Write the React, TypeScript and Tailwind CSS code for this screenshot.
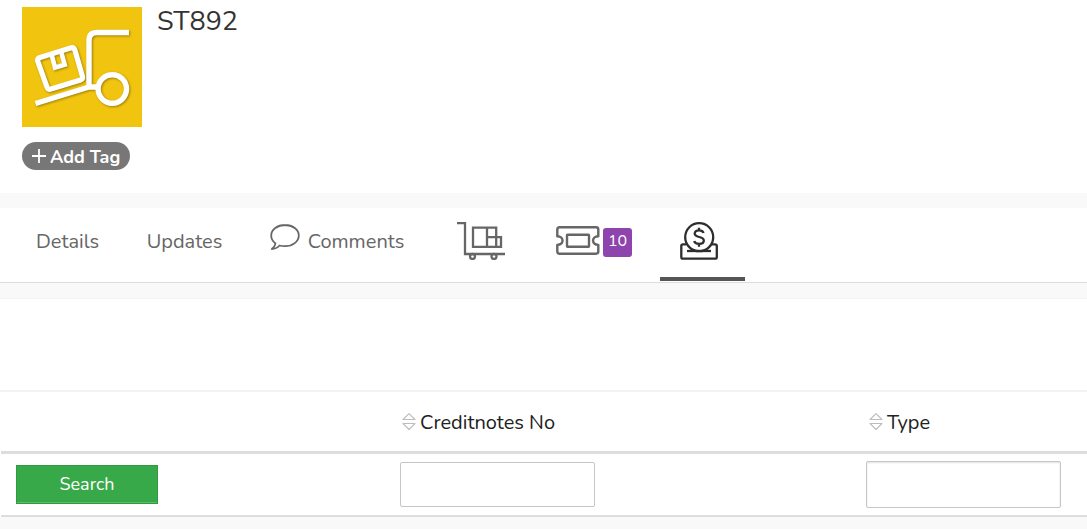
import type { ReactNode } from "react";

function HandTruck() {
  return (
    <svg viewBox="0 0 120 120" className="size-[120px] bg-[#f1c40f]" fill="none" stroke="#fff" strokeWidth="5.4" role="img" aria-label="Stock transfer">
      <g className="drop-shadow-[1px_1px_1px_rgba(0,0,0,0.35)]">
        <path d="M107 25.5H75Q67 25.5 67 33.5V80" />
        <path d="M13.500 96.500 67 80H75" strokeLinejoin="round" />
        <circle cx="90.300" cy="82" r="14.200" />
        <path d="M18 50.500 48.500 41Q52 40 53 43.500L60.500 69.500Q61 72 58.500 73L29 82Q26 83 25 80L15.800 54.500Q15 51.500 18 50.500Z" strokeWidth="5.200" />
        <path d="M29.700 48 33 60.600 42.700 57.600 39.200 45" strokeWidth="4.600" />
      </g>
    </svg>
  );
}

function Bubble() {
  return (
    <svg viewBox="0 0 30 28" className="h-7 w-[30px] -translate-y-1" fill="none" stroke="currentColor" strokeWidth="1.800" strokeLinejoin="round" aria-hidden="true">
      <path d="M15 1C7.500 1 1.200 5.700 1.200 11.500c0 3.300 1.700 6 4.300 8C5.200 21.800 3.800 23.500 1.800 25c3 0 5.700-1.300 7.700-3.500 1.700.5 3.500.7 5.500.7 7.600 0 13.800-4.700 13.800-10.700S22.600 1 15 1Z" />
    </svg>
  );
}

function Cart() {
  return (
    <svg viewBox="0 0 48 40" className="h-10 w-12" fill="none" stroke="currentColor" strokeWidth="2.300" aria-hidden="true">
      <path d="M0 3.200H8V34H48M16 7.700H39.200V26.800H16ZM30 7.700V26.800M30 17.200H44V26.800H30" />
      <circle cx="15.500" cy="36.500" r="2.500" />
      <circle cx="37" cy="36.500" r="2.500" />
    </svg>
  );
}

function Ticket() {
  return (
    <svg viewBox="0 0 44 30" className="h-[30px] w-11" fill="none" stroke="currentColor" strokeWidth="2.400" strokeLinejoin="round" aria-hidden="true">
      <path d="M3.500 2.300H40Q42.300 2.300 42.300 4.500V11.300C35.300 11.500 35.300 19.700 42.300 19.900V26.600Q42.300 28.700 40 28.700H3.500Q1.300 28.700 1.300 26.600V19.900C8.300 19.700 8.300 11.500 1.300 11.300V4.500Q1.300 2.300 3.500 2.300Z" />
      <rect x="11" y="9.700" width="22" height="12" rx="0.500" />
    </svg>
  );
}

function CoinSlot() {
  return (
    <svg viewBox="0 0 38 40" className="h-10 w-[38px]" fill="none" stroke="currentColor" strokeWidth="2.300" aria-hidden="true">
      <circle cx="19.200" cy="17.200" r="14" />
      <path d="M6 24.300H3Q1.300 24.300 1.300 26V37Q1.300 38.700 3 38.700H35Q36.800 38.700 36.800 37V26Q36.800 24.300 35 24.300H32" />
      <path d="M7 31H31" />
      <path d="M23.500 13C23 11.200 21.300 10.400 19 10.400c-2.700 0-4.300 1.200-4.300 3.100 0 4.700 9.100 2.300 9.100 7 0 2.200-1.900 3.400-4.700 3.400-2.700 0-4.400-1-4.900-2.900M19 7.700V10.400M19 24V26.700" />
    </svg>
  );
}

function SortIcon() {
  return (
    <svg viewBox="0 0 14 18" className="h-[18px] w-3.5 -translate-y-px" fill="none" stroke="#bdbdbd" strokeWidth="1.100" strokeLinejoin="round" aria-hidden="true">
      <path d="M1 6.500 7 0.700 13 6.500ZM1 10.500H13L7 16.500Z" />
    </svg>
  );
}

function Tab({ label, active, icon, children, width }: { label: string; active?: boolean; icon?: boolean; children: ReactNode; width: string }) {
  return (
    <button
      type="button"
      role="tab"
      aria-label={label}
      aria-selected={!!active}
      className={`flex h-[73px] shrink-0 items-center justify-center border-b-4 ${icon ? "pb-[5px]" : "pb-px"} ${width} ${active ? "border-[#555] text-[#2e2e2e]" : "border-transparent text-[#666]"}`}
    >
      {children}
    </button>
  );
}

function SortHeader({ label }: { label: string }) {
  return (
    <th scope="col" className="px-2 pt-1 text-left font-normal">
      <button type="button" className="flex items-center gap-1 pl-0.5">
        <SortIcon />
        {label}
      </button>
    </th>
  );
}

export default function App() {
  return (
    <div className="min-h-screen bg-[#f9f9f9] font-['Nunito','Lato',sans-serif] text-[#212121]">
      <header className="h-[193px] bg-white px-[22px] pt-[7px]">
        <div className="flex items-start gap-[15px]">
          <HandTruck />
          <h1 className="text-[27px] leading-[30px] text-[#333]">ST892</h1>
        </div>
        <button type="button" className="mt-[15px] flex h-7 items-center gap-1 rounded-full bg-[#777] px-2.5 pt-0.5 text-lg font-bold text-white">
          <svg viewBox="0 0 14 14" className="mb-0.5 size-3.5" stroke="currentColor" strokeWidth="1.800" aria-hidden="true">
            <path d="M7 0V14M0 7H14" />
          </svg>
          Add Tag
        </button>
      </header>

      <nav role="tablist" aria-label="Sections" className="mt-[15px] flex h-[75px] gap-1 border-b border-[#ddd] bg-white pl-3 text-xl">
        <Tab label="Details" width="w-[111px]">Details</Tab>
        <Tab label="Updates" width="w-[115px]">Updates</Tab>
        <Tab label="Comments" width="w-[182px]">
          <span className="flex items-center gap-2"><Bubble />Comments</span>
        </Tab>
        <Tab label="Deliveries" icon width="w-[98px]"><Cart /></Tab>
        <Tab label="Tickets, 10" icon width="w-[122px]">
          <span className="flex items-start gap-[3px] pr-0.5">
            <Ticket />
            <span className="mt-[3px] -mb-0.5 flex h-[29px] w-[29px] items-center justify-center rounded-[3px] bg-[#8e44ad] pb-[3px] text-base text-white">10</span>
          </span>
        </Tab>
        <Tab label="Credit notes" icon active width="w-[85px]">
          <span className="-ml-2"><CoinSlot /></span>
        </Tab>
      </nav>

      <main className="mt-[15px] border-t border-[#f4f4f4] bg-white pt-[91px]">
        <div className="border-t-2 border-[#f2f2f2] pl-px">
          <table className="w-full table-fixed border-collapse text-xl">
            <colgroup>
              <col className="w-[36%]" />
              <col className="w-[43%]" />
              <col />
            </colgroup>
            <thead>
              <tr className="h-[60px] border-b-3 border-[#ddd]">
                <td />
                <SortHeader label="Creditnotes No" />
                <SortHeader label="Type" />
              </tr>
            </thead>
            <tbody>
              <tr className="h-16 border-b-2 border-[#ddd]">
                <td className="px-[15px]">
                  <button type="button" className="block h-[39px] w-[142px] border border-[#319a40] bg-[#37a948] text-lg leading-none text-white shadow-[inset_0_-1px_0_#5dbb6a]">Search</button>
                </td>
                <td className="px-2">
                  <input type="text" aria-label="Creditnotes No" className="block h-[45px] w-[195px] rounded-[2px] border border-[#c6c6c6] bg-white px-2" />
                </td>
                <td className="px-[7px]">
                  <input type="text" aria-label="Type" className="block h-[47px] w-[195px] rounded-[2px] border border-[#c6c6c6] bg-white px-2 shadow-[inset_0_1px_2px_rgba(0,0,0,0.12)]" />
                </td>
              </tr>
            </tbody>
          </table>
        </div>
      </main>
    </div>
  );
}
